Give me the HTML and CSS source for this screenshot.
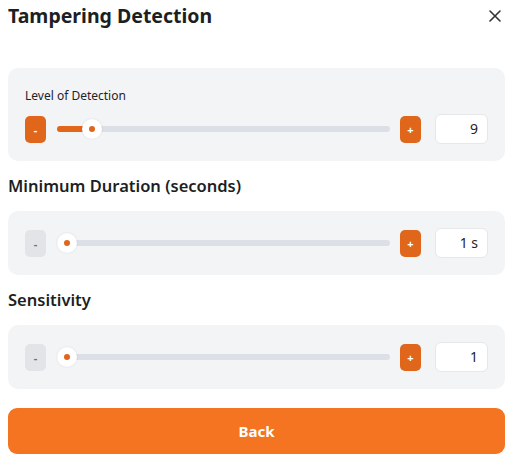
FILE: index.html
```html
<!DOCTYPE html>
<html>
<head>
<meta charset="utf-8">
<link rel="stylesheet" href="styles.css">
</head>
<body>
<div class="dialog">
  <div class="header">
    <h1 class="title">Tampering Detection</h1>
    <button class="close" aria-label="Close">
      <svg width="12" height="12" viewBox="0 0 12 12"><path d="M1 1L11 11M11 1L1 11" stroke="#333" stroke-width="1.6" stroke-linecap="round"/></svg>
    </button>
  </div>

  <div class="panel panel-first">
    <div class="label">Level of Detection</div>
    <div class="controls">
      <button class="step step-on">-</button>
      <div class="slider">
        <div class="track"></div>
        <div class="fill" style="width: 35px"></div>
        <div class="thumb" style="left: 35px"></div>
      </div>
      <button class="step step-on">+</button>
      <div class="value">9</div>
    </div>
  </div>

  <h2 class="heading">Minimum Duration (seconds)</h2>
  <div class="panel">
    <div class="controls">
      <button class="step step-off">-</button>
      <div class="slider">
        <div class="track"></div>
        <div class="thumb" style="left: 10px"></div>
      </div>
      <button class="step step-on">+</button>
      <div class="value">1 s</div>
    </div>
  </div>

  <h2 class="heading">Sensitivity</h2>
  <div class="panel">
    <div class="controls">
      <button class="step step-off">-</button>
      <div class="slider">
        <div class="track"></div>
        <div class="thumb" style="left: 10px"></div>
      </div>
      <button class="step step-on">+</button>
      <div class="value">1</div>
    </div>
  </div>

  <button class="back">Back</button>
</div>
</body>
</html>
```
FILE: styles.css
```css
* { box-sizing: border-box; }
html, body { margin: 0; padding: 0; background: #fff; }
body { font-family: "Noto Sans", "Open Sans", sans-serif; color: #1f2329; }
.dialog { padding: 0 5px 0 8px; }
.header { display: flex; align-items: center; justify-content: space-between; height: 32px; }
.title { margin: 0; font-size: 19.5px; font-weight: 700; line-height: 32px; color: #1c1f24; }
.close { border: 0; background: none; padding: 0; width: 16px; height: 16px; display: flex; align-items: center; justify-content: center; margin-right: 2px; }
.panel { background: #f3f4f6; border-radius: 10px; padding: 17px; }
.panel-first { margin-top: 36px; padding-top: 19px; }
.label { font-size: 12px; line-height: 18px; margin-bottom: 9px; color: #1f2329; }
.controls { display: flex; align-items: center; height: 30px; }
.step { width: 21px; height: 27px; border: 0; border-radius: 5px; padding: 0; font-family: inherit; font-size: 11px; font-weight: 700; line-height: 27px; }
.step-on { background: #e0661c; color: #fff; }
.step-off { background: #e3e4e7; color: #6b6f76; }
.slider { position: relative; flex: 1; height: 20px; margin: 0 10px 0 11px; }
.track { position: absolute; left: 0; right: 0; top: 7px; height: 6px; border-radius: 3px; background: #dcdfe6; }
.fill { position: absolute; left: 0; top: 7px; height: 6px; border-radius: 3px; background: #e0661c; }
.thumb { position: absolute; top: 0; width: 20px; height: 20px; margin-left: -10px; border-radius: 50%; background: #fff; box-shadow: 0 0 2px rgba(0,0,0,0.12); }
.thumb::after { content: ""; position: absolute; left: 7px; top: 7px; width: 6px; height: 6px; border-radius: 50%; background: #e0661c; }
.value { width: 53px; height: 30px; margin-left: 14px; background: #fff; border: 1px solid #e6e7ea; border-radius: 6px; text-align: right; padding-right: 9px; font-size: 14px; line-height: 28px; color: #1f2329; }
.heading { margin: 14px 0 14px; font-size: 16.5px; font-weight: 600; line-height: 22px; color: #1c1f24; }
.back { display: block; width: 100%; height: 46px; margin-top: 19px; border: 0; border-radius: 9px; background: #f47421; color: #fff; font-family: inherit; font-size: 15px; font-weight: 700; }
```
